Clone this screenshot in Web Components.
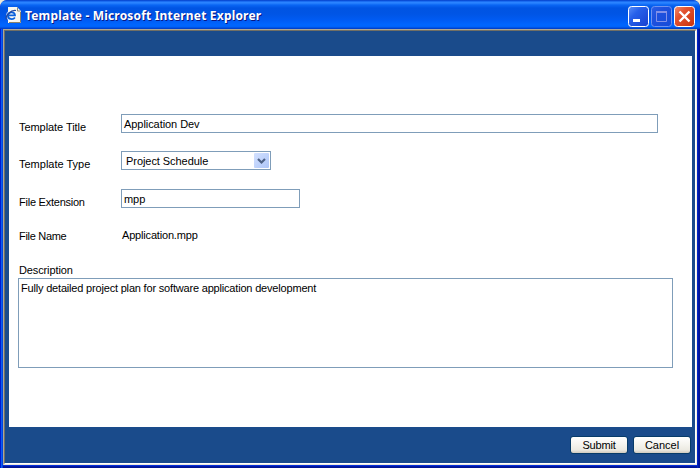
<!DOCTYPE html>
<html lang="en">
<head>
<meta charset="utf-8">
<title>Template</title>
<style>
html,body{margin:0;width:700px;height:468px;overflow:hidden;background:#ece9d8}
body{font:11px/14px "Liberation Sans",Arial,sans-serif;color:#000}
</style>
</head>
<body>
<template id="t-window">
<style>
:host{display:flex;flex-direction:column;box-sizing:border-box;width:700px;height:468px;border-radius:7px 7px 0 0;overflow:hidden;background:linear-gradient(90deg,#0019cf 0,#0019cf 1px,#0b5cf0 1px,#0b5cf0 2px,#0046e0 2px,#0046e0 3px,transparent 3px,transparent 697px,#0030d8 697px,#0018b0 698px,#00138c 700px),linear-gradient(#0046e0 465px,#0831d9 465px,#0831d9 466px,#0018a8 466px,#00138c 468px)}
.client{flex:1;margin:0 3px 3px;box-sizing:border-box;border:1px solid #aca899;border-right:1px solid #f1efe2;border-bottom:1px solid #ece9d8;display:flex}
.inner{flex:1;display:flex;flex-direction:column;border:1px solid #716f64;border-right-color:#fff;border-bottom-color:#fff;background:#1a4b8b}
</style>
<slot name="title"></slot>
<div class="client"><div class="inner"><slot></slot></div></div>
</template>

<template id="t-title">
<style>
:host{display:flex;align-items:center;box-sizing:border-box;height:29px;padding:3px 5px 0 5px;background:linear-gradient(#0842c8 0,#0c57e4 1px,#2a83ff 2px,#2a83ff 3px,#0a66f4 5px,#0054e3 8px,#0055e5 14px,#005bf3 20px,#0066ff 25px,#0062f8 27px,#0046d4 28px,#003cc4 29px);border-radius:7px 7px 0 0}
.text{flex:1;margin-left:4px;font:bold 12px/16px "Noto Sans","Open Sans",sans-serif;color:#fff;text-shadow:1px 1px #0a1883;white-space:nowrap;letter-spacing:.18px}
.buttons{display:flex;gap:2px}
svg{display:block;flex:none;margin-top:-2px}
</style>
<svg width="16" height="16" viewBox="0 0 16 16">
<path d="M3 0h9l4 4v12H3z" fill="#f8f6ee"/>
<path d="M12.500 .5v3.500h3" fill="none" stroke="#8a8778"/>
<path d="M15.500 5v10.500H4" fill="none" stroke="#8a836c"/>
<path d="M2.800 8.400h7.400C10 4.300 3.300 3.900 2.800 8.200 2.600 13 8.300 13.300 10 10.600" fill="none" stroke="#fff" stroke-width="3.400" opacity=".7"/>
<path d="M3 8.400h7C9.900 4.500 3.500 4.100 3 8.200 2.700 12.700 8.200 13 9.900 10.500" fill="none" stroke="#0b62dc" stroke-width="1.800"/>
<path d="M1.500 12.500C-.5 9.500 6 2.500 11 3.500" fill="none" stroke="#2348a0" stroke-width="1.200"/>
</svg>
<span class="text"><slot></slot></span>
<span class="buttons"><caption-button kind="minimize"></caption-button><caption-button kind="maximize"></caption-button><caption-button kind="close"></caption-button></span>
</template>

<template id="t-label">
<style>:host{display:block;width:102px;white-space:nowrap;letter-spacing:var(--ls,-.12px)}</style><slot></slot>
</template>

<template id="t-row">
<style>:host{display:flex;align-items:flex-start;height:19px;margin-left:10px}form-label{padding-top:var(--drop,6px)}</style>
<form-label></form-label><slot></slot>
</template>

<template id="t-field">
<style>:host{display:flex;box-sizing:border-box;border:1px solid #7f9db9;background:#fff;height:19px;padding:2px 2px 0;white-space:nowrap}
span{flex:1;letter-spacing:var(--ls,-.04px)}svg{display:none}
:host([dropdown]){padding:1px 1px 1px 4px}:host([dropdown]) span{padding-top:1px}:host([dropdown]) svg{display:block}</style>
<span><slot></slot></span>
<svg width="15" height="15" viewBox="0 0 15 15"><defs><linearGradient id="g" x1="0" y1="0" x2="1" y2="1"><stop stop-color="#d3e1ff"/><stop offset="1" stop-color="#adc5f7"/></linearGradient></defs><rect width="15" height="15" rx="1" fill="url(#g)"/><path d="M4 6l3.500 3.500L11 6" fill="none" stroke="#4d6185" stroke-width="2.200"/></svg>
</template>

<template id="t-button">
<style>:host{display:block;box-sizing:border-box;width:58px;height:18px;border:1px solid #073b69;border-radius:3px;background:linear-gradient(#fff,#f5f4ef 45%,#eceae2 80%,#d0cabf);text-align:center;line-height:16px;letter-spacing:var(--ls,0)}</style><slot></slot>
</template>

<main-window></main-window>

<script>
const define = (name, build) => customElements.define(name, class extends HTMLElement {
  constructor(){ super(); this.attachShadow({mode:"open"}); }
  connectedCallback(){ if(!this.shadowRoot.firstChild) build(this, this.shadowRoot); }
});
const stamp = id => (host, root) => root.append(document.getElementById(id).content.cloneNode(true));
const captionArt = {
  minimize:'<path d="M5 13h7v3H5z" fill="#fff"/>',
  maximize:'<path d="M5.500 5.500h10v10h-10z" fill="none" stroke="#8291e8"/><path d="M5 5h11v2H5z" fill="#8291e8"/>',
  close:'<path d="M5.500 5.500l10 10M15.500 5.500l-10 10" stroke="#fff" stroke-width="2.400"/>'
};
define("caption-button",(host,root)=>{
  const kind=host.getAttribute("kind"), red=kind==="close", off=kind==="maximize";
  root.innerHTML=`<style>:host{display:block;width:21px;height:21px}svg{display:block}</style>
  <svg width="21" height="21" viewBox="0 0 21 21"><defs><linearGradient id="b" x1="0" y1="0" x2="1" y2="1">
  <stop stop-color="${red?'#f08d70':off?'#2d5fe6':'#5c90f8'}"/><stop offset=".35" stop-color="${red?'#e35330':off?'#1e51de':'#2760ea'}"/><stop offset="1" stop-color="${red?'#c9320b':off?'#164bd8':'#1740cf'}"/></linearGradient></defs>
  <rect x=".5" y=".5" width="20" height="20" rx="3" fill="url(#b)" stroke="${off?'#6f93f0':'#fff'}"/>${captionArt[kind]}</svg>`;
});
define("form-label",stamp("t-label"));
define("form-row",(host,root)=>{ stamp("t-row")(host,root); root.querySelector("form-label").textContent=host.getAttribute("label"); });
define("form-field",stamp("t-field"));
define("push-button",stamp("t-button"));
define("title-bar",stamp("t-title"));
define("xp-window",stamp("t-window"));
define("main-window",(host,root)=>{
  root.innerHTML=`<style>
  :host{display:block}
  .page{box-sizing:border-box;margin:25px 3px 0 4px;height:371px;background:#fff;padding-top:58px;display:flex;flex-direction:column}
  .title{width:537px}.type{width:150px}.ext{width:179px}
  .desc{width:655px;height:90px;margin-left:9px;--ls:-.185px}
  .r1{--ls:-.06px}.r2{margin-top:18px;--ls:0px}.r3{margin-top:19px;--ls:-.24px}.r4{margin-top:19px;--ls:-.3px}
  .type,.ext{--ls:-.06px}
  .name{margin:1px 0 0 1px;--ls:-.18px}.dl{margin:17px 0 1px 10px}
  .foot{display:flex;justify-content:flex-end;gap:5px;margin-top:9px;padding-right:4px}
  .submit{--ls:-.2px}
  </style>
  <xp-window><title-bar slot="title">Template - Microsoft Internet Explorer</title-bar>
  <div class="page">
    <form-row class="r1" label="Template Title"><form-field class="title">Application Dev</form-field></form-row>
    <form-row class="r2" label="Template Type"><form-field class="type" dropdown>Project Schedule</form-field></form-row>
    <form-row class="r3" label="File Extension"><form-field class="ext">mpp</form-field></form-row>
    <form-row class="r4" style="--drop:2px" label="File Name"><form-label class="name">Application.mpp</form-label></form-row>
    <form-label class="dl">Description</form-label>
    <form-field class="desc">Fully detailed project plan for software application development</form-field>
  </div>
  <div class="foot"><push-button class="submit">Submit</push-button><push-button>Cancel</push-button></div>
  </xp-window>`;
});
</script>
</body>
</html>
